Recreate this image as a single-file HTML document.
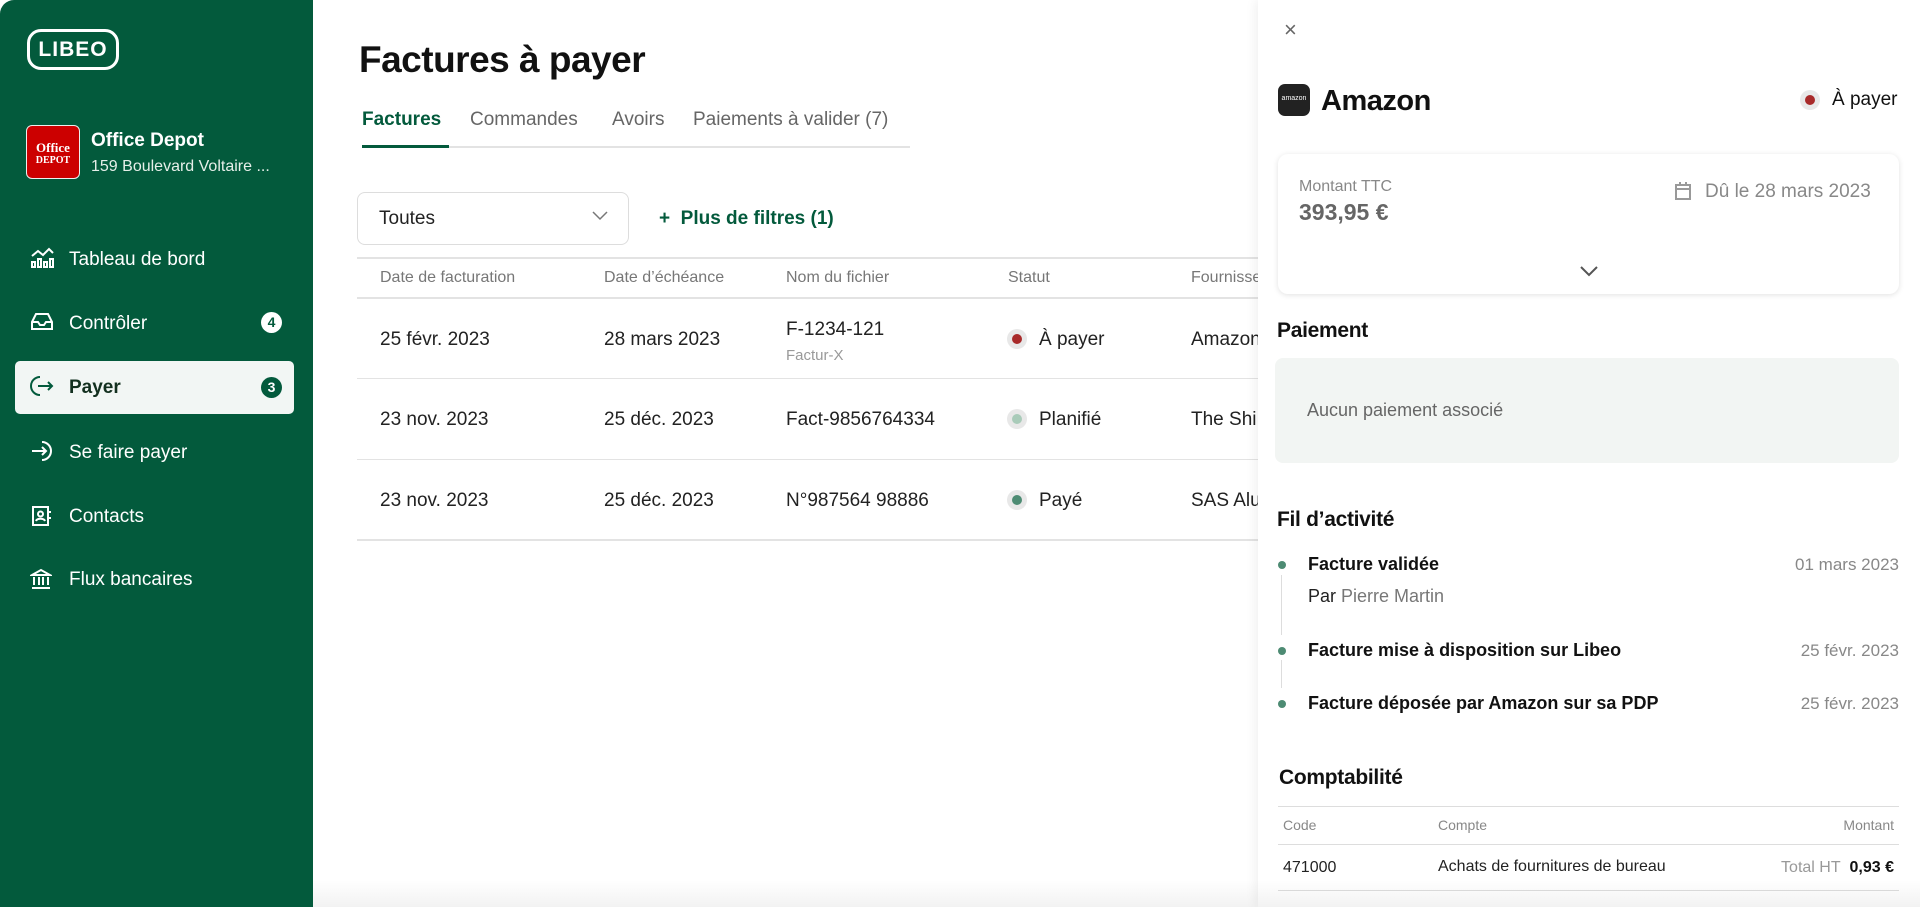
<!DOCTYPE html>
<html><head><meta charset="utf-8"><style>
*{margin:0;padding:0;box-sizing:border-box}
body{width:1920px;height:907px;overflow:hidden;background:#fff;font-family:"Liberation Sans",sans-serif;position:relative;color:#222}
.a{position:absolute;white-space:nowrap}
#sb{position:absolute;left:0;top:0;width:313px;height:907px;background:#035a3c;border-top-left-radius:14px}
.nav{color:#fff;font-size:19px}
.ic{position:absolute;left:30px}
.th{color:#777;font-size:16px}
.td{font-size:19px;color:#222}
.hl{position:absolute;left:357px;width:901px;height:1px;background:#e3e3e3}
.dot{position:absolute;width:20px;height:20px;border-radius:50%;background:#e8e8e8}
.dot i{position:absolute;left:5px;top:5px;width:10px;height:10px;border-radius:50%}
.h2{font-weight:bold;font-size:21px;color:#111;letter-spacing:-0.3px}
.ft{font-weight:bold;font-size:18px;color:#111}
.dt{font-size:17px;color:#888;right:21px}
.gd{position:absolute;left:1278px;width:8px;height:8px;border-radius:50%;background:#4d8b73}
</style></head><body>
<div id="sb">
 <div class="a" style="left:27px;top:29px;width:92px;height:41px;border:3px solid #fff;border-radius:14px;color:#fff;font-weight:bold;font-size:21px;text-align:center;line-height:35px;letter-spacing:1px">LIBEO</div>
 <div class="a" style="left:26px;top:125px;width:54px;height:54px;background:#cc0000;border-radius:6px;border:1px solid #eee;color:#fff;font-family:'Liberation Serif',serif;font-weight:bold;font-size:13px;line-height:11px;text-align:center;padding-top:16px">Office<br><span style="font-size:10px">DEPOT</span></div>
 <div class="a" style="left:91px;top:130px;color:#fff;font-weight:bold;font-size:19px">Office Depot</div>
 <div class="a" style="left:91px;top:158px;color:#e6efe9;font-size:16px">159 Boulevard Voltaire ...</div>
 <div class="a" style="left:15px;top:361px;width:279px;height:53px;background:#f2f6f4;border-radius:5px"></div>
 <svg class="ic" style="top:247px" width="26" height="22" viewBox="0 0 26 22" fill="none" stroke="#fff" stroke-width="2"><path d="M2 9l6-5 5 4 6-6 4 4"/><rect x="2" y="15" width="3" height="5"/><rect x="8" y="12" width="3" height="8"/><rect x="14" y="15" width="3" height="5"/><rect x="20" y="12" width="3" height="8"/></svg>
 <div class="a nav" style="left:69px;top:249px">Tableau de bord</div>
 <svg class="ic" style="top:311px" width="24" height="20" viewBox="0 0 24 20" fill="none" stroke="#fff" stroke-width="2"><path d="M2 11l4-8h12l4 8v7H2z M2 11h6l2 3h4l2-3h6"/></svg>
 <div class="a nav" style="left:69px;top:313px">Contrôler</div>
 <div class="a" style="left:261px;top:312px;width:21px;height:21px;border-radius:50%;background:#fff;color:#035a3c;font-weight:bold;font-size:14px;text-align:center;line-height:21px">4</div>
 <svg class="ic" style="top:375px" width="24" height="22" viewBox="0 0 24 22" fill="none" stroke="#035a3c" stroke-width="2"><path d="M10 2a9 9 0 1 0 0 18M8 11h14M18 7l4 4-4 4"/></svg>
 <div class="a nav" style="left:69px;top:377px;color:#13301f;font-weight:bold">Payer</div>
 <div class="a" style="left:261px;top:377px;width:21px;height:21px;border-radius:50%;background:#035a3c;color:#fff;font-weight:bold;font-size:14px;text-align:center;line-height:21px">3</div>
 <svg class="ic" style="top:440px" width="24" height="22" viewBox="0 0 24 22" fill="none" stroke="#fff" stroke-width="2"><path d="M12 2a9 9 0 1 1 0 18M2 11h14M12 7l4 4-4 4"/></svg>
 <div class="a nav" style="left:69px;top:442px">Se faire payer</div>
 <svg class="ic" style="top:505px" width="22" height="22" viewBox="0 0 22 22" fill="none" stroke="#fff" stroke-width="2"><rect x="3" y="2" width="15" height="18"/><circle cx="10.5" cy="9" r="2.5"/><path d="M6 16c1-3 8-3 9 0M20 6v2M20 12v2"/></svg>
 <div class="a nav" style="left:69px;top:506px">Contacts</div>
 <svg class="ic" style="top:568px" width="22" height="22" viewBox="0 0 22 22" fill="none" stroke="#fff" stroke-width="2"><path d="M2 7l9-5 9 5zM4 9v8M9 9v8M13 9v8M18 9v8M2 20h18"/></svg>
 <div class="a nav" style="left:69px;top:569px">Flux bancaires</div>
</div>

<div class="a" style="left:359px;top:39px;font-size:37px;font-weight:bold;color:#111;letter-spacing:-0.5px">Factures à payer</div>
<div class="a" style="left:362px;top:109px;font-size:19px;color:#035a3c;font-weight:bold">Factures</div>
<div class="a" style="left:470px;top:109px;font-size:19px;color:#666">Commandes</div>
<div class="a" style="left:612px;top:109px;font-size:19px;color:#666">Avoirs</div>
<div class="a" style="left:693px;top:109px;font-size:19px;color:#666">Paiements à valider (7)</div>
<div class="a" style="left:362px;top:146px;width:548px;height:2px;background:#e3e3e3"></div>
<div class="a" style="left:362px;top:145px;width:87px;height:3px;background:#035a3c"></div>

<div class="a" style="left:357px;top:192px;width:272px;height:53px;border:1px solid #ddd;border-radius:8px"></div>
<div class="a" style="left:379px;top:208px;font-size:19px">Toutes</div>
<svg class="a" style="left:592px;top:211px" width="16" height="10" viewBox="0 0 16 10" fill="none" stroke="#777" stroke-width="1.5"><path d="M1 1l7 7 7-7"/></svg>
<div class="a" style="left:659px;top:208px;font-size:19px;color:#035a3c;font-weight:bold">+&nbsp;&nbsp;Plus de filtres (1)</div>

<div class="hl" style="top:257px;height:2px"></div>
<div class="a th" style="left:380px;top:269px">Date de facturation</div>
<div class="a th" style="left:604px;top:269px">Date d’échéance</div>
<div class="a th" style="left:786px;top:269px">Nom du fichier</div>
<div class="a th" style="left:1008px;top:269px">Statut</div>
<div class="a th" style="left:1191px;top:269px">Fournisseur</div>
<div class="hl" style="top:297px;height:2px"></div>

<div class="a td" style="left:380px;top:329px">25 févr. 2023</div>
<div class="a td" style="left:604px;top:329px">28 mars 2023</div>
<div class="a td" style="left:786px;top:319px">F-1234-121</div>
<div class="a" style="left:786px;top:347px;font-size:15px;color:#999">Factur-X</div>
<div class="dot" style="left:1007px;top:329px"><i style="background:#a82a2a"></i></div>
<div class="a td" style="left:1039px;top:329px">À payer</div>
<div class="a td" style="left:1191px;top:329px">Amazon</div>
<div class="hl" style="top:378px"></div>

<div class="a td" style="left:380px;top:409px">23 nov. 2023</div>
<div class="a td" style="left:604px;top:409px">25 déc. 2023</div>
<div class="a td" style="left:786px;top:409px">Fact-9856764334</div>
<div class="dot" style="left:1007px;top:409px"><i style="background:#a9cbb9"></i></div>
<div class="a td" style="left:1039px;top:409px">Planifié</div>
<div class="a td" style="left:1191px;top:409px">The Shi</div>
<div class="hl" style="top:459px"></div>

<div class="a td" style="left:380px;top:490px">23 nov. 2023</div>
<div class="a td" style="left:604px;top:490px">25 déc. 2023</div>
<div class="a td" style="left:786px;top:490px">N°987564 98886</div>
<div class="dot" style="left:1007px;top:490px"><i style="background:#4d8b73"></i></div>
<div class="a td" style="left:1039px;top:490px">Payé</div>
<div class="a td" style="left:1191px;top:490px">SAS Alu</div>
<div class="hl" style="top:539px;height:2px"></div>

<div class="a" style="left:1258px;top:0;width:662px;height:907px;background:#fff;box-shadow:-3px 0 10px rgba(0,0,0,0.06)">
 <div class="a" style="left:26px;top:17px;font-size:22px;color:#666">×</div>
 <div class="a" style="left:20px;top:84px;width:32px;height:32px;border-radius:7px;background:#222;color:#fff;font-size:7px;text-align:center;line-height:30px">amazon</div>
 <div class="a" style="left:63px;top:85px;font-size:29px;font-weight:bold;color:#111;letter-spacing:-0.5px">Amazon</div>
 <div class="dot" style="left:542px;top:90px"><i style="background:#a82a2a"></i></div>
 <div class="a" style="left:574px;top:89px;font-size:19px;color:#111">À payer</div>
 <div class="a" style="left:20px;top:154px;width:621px;height:140px;border-radius:10px;box-shadow:0 1px 6px rgba(0,0,0,0.12)"></div>
 <div class="a" style="left:41px;top:178px;font-size:16px;color:#888">Montant TTC</div>
 <div class="a" style="left:41px;top:199px;font-size:23px;font-weight:bold;color:#666">393,95 €</div>
 <svg class="a" style="left:416px;top:181px" width="18" height="20" viewBox="0 0 18 20" fill="none" stroke="#999" stroke-width="2"><rect x="2" y="4" width="14" height="14"/><path d="M2 8h14M6 1v4M12 1v4"/></svg>
 <div class="a" style="left:447px;top:181px;font-size:19px;color:#888">Dû le 28 mars 2023</div>
 <svg class="a" style="left:322px;top:266px" width="18" height="11" viewBox="0 0 18 11" fill="none" stroke="#555" stroke-width="2"><path d="M1 1l8 8 8-8"/></svg>
 <div class="a h2" style="left:19px;top:319px">Paiement</div>
 <div class="a" style="left:17px;top:358px;width:624px;height:105px;background:#f2f5f3;border-radius:8px"></div>
 <div class="a" style="left:49px;top:400px;font-size:18px;color:#666">Aucun paiement associé</div>
 <div class="a h2" style="left:19px;top:508px">Fil d’activité</div>
 <div class="a" style="left:23px;top:575px;width:1px;height:60px;background:#ddd"></div>
 <div class="a" style="left:23px;top:660px;width:1px;height:28px;background:#ddd"></div>
</div>
<div class="gd" style="top:561px"></div>
<div class="a ft" style="left:1308px;top:554px">Facture validée</div>
<div class="a dt" style="top:555px">01 mars 2023</div>
<div class="a" style="left:1308px;top:586px;font-size:18px;color:#222">Par <span style="color:#777">Pierre Martin</span></div>
<div class="gd" style="top:647px"></div>
<div class="a ft" style="left:1308px;top:640px">Facture mise à disposition sur Libeo</div>
<div class="a dt" style="top:641px">25 févr. 2023</div>
<div class="gd" style="top:700px"></div>
<div class="a ft" style="left:1308px;top:693px">Facture déposée par Amazon sur sa PDP</div>
<div class="a dt" style="top:694px">25 févr. 2023</div>
<div class="a h2" style="left:1279px;top:766px">Comptabilité</div>
<div class="a" style="left:1278px;top:806px;width:621px;height:1px;background:#ddd"></div>
<div class="a" style="left:1283px;top:817px;font-size:14px;color:#888">Code</div>
<div class="a" style="left:1438px;top:817px;font-size:14px;color:#888">Compte</div>
<div class="a" style="right:26px;top:817px;font-size:14px;color:#888">Montant</div>
<div class="a" style="left:1278px;top:844px;width:621px;height:1px;background:#ddd"></div>
<div class="a" style="left:1283px;top:859px;font-size:16px;color:#222">471000</div>
<div class="a" style="left:1438px;top:858px;font-size:16px;color:#222">Achats de fournitures de bureau</div>
<div class="a" style="right:26px;top:859px;font-size:16px;color:#999">Total HT&nbsp;&nbsp;<b style="color:#111">0,93 €</b></div>
<div class="a" style="left:1278px;top:890px;width:621px;height:1px;background:#ddd"></div>
<div class="a" style="left:313px;top:880px;width:1607px;height:27px;background:linear-gradient(rgba(255,255,255,0),rgba(0,0,0,0.05))"></div>
</body></html>
